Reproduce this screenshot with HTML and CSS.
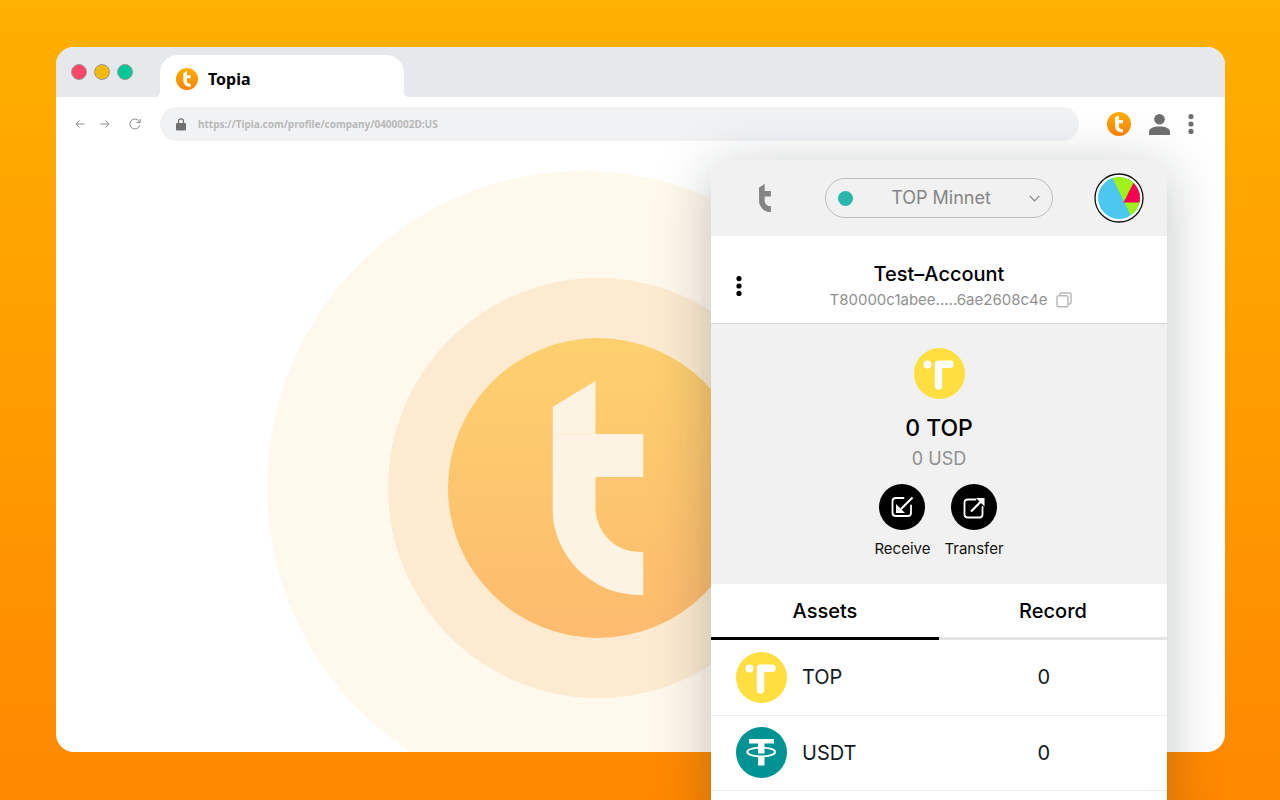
FILE: index.html
```html
<!DOCTYPE html>
<html lang="en">
<head>
<meta charset="utf-8">
<title>Topia</title>
<meta name="viewport" content="width=device-width, initial-scale=1">
<link rel="stylesheet" href="styles.css">
</head>
<body>
<svg class="defs" width="0" height="0" aria-hidden="true">
  <defs>
    <linearGradient id="orange" x1="0" y1="0" x2="0" y2="1">
      <stop offset="0" stop-color="#ffae00"/><stop offset="1" stop-color="#ff8200"/>
    </linearGradient>
    <linearGradient id="soft-orange" x1="0" y1="0" x2="0" y2="1">
      <stop offset="0" stop-color="#fdd06e"/><stop offset="1" stop-color="#fdbb6e"/>
    </linearGradient>
    <symbol id="letter" viewBox="0 0 91 214">
      <path d="M0 26 43 0V53H91V96H43V128A44 44 0 0 0 87 171H91V214H87A87 87 0 0 1 0 127Z"/>
    </symbol>
    <symbol id="badge" viewBox="0 0 24 24">
      <circle cx="12" cy="12" r="12" fill="url(#orange)"/>
      <path fill="#fff" d="M8 5.600 12 3.400V8H16V11.300H12V14.200Q12 17 16 17.200V20.600Q8 20.400 8 13.800Z"/>
    </symbol>
    <symbol id="top-coin" viewBox="0 0 51 51">
      <circle cx="25.500" cy="25.500" r="25.500" fill="#ffdf3f"/>
      <circle cx="13.500" cy="16.500" r="4" fill="#fff"/>
      <path d="M36 16.300H24.500V38" fill="none" stroke="#fff" stroke-width="7.400" stroke-linecap="round" stroke-linejoin="round"/>
    </symbol>
    <symbol id="usdt-coin" viewBox="0 0 51 51">
      <circle cx="25.500" cy="25.500" r="25.500" fill="#009393"/>
      <path fill="#fff" d="M13 12H38V16.500H28.500V26.500H22V16.500H13ZM22 29H28.500V38.500H22Z"/>
      <ellipse cx="25.200" cy="25" rx="14" ry="4.400" fill="none" stroke="#fff" stroke-width="1.900"/>
    </symbol>
  </defs>
</svg>

<div class="stage">
  <div class="browser">
    <div class="tabstrip">
      <div class="lights"><span class="light red"></span><span class="light yellow"></span><span class="light green"></span></div>
      <div class="tab"><svg class="favicon"><use href="#badge"/></svg><span>Topia</span></div>
    </div>
    <div class="toolbar">
      <nav class="history" aria-label="History">
        <button class="plain" aria-label="Back"><svg width="10" height="10" viewBox="0 0 10 10"><path class="thin" d="M9.500 5H1M4.500 1.500 1 5 4.500 8.500"/></svg></button>
        <button class="plain" aria-label="Forward"><svg width="10" height="10" viewBox="0 0 10 10"><path class="thin" d="M.5 5H9M5.500 1.500 9 5 5.500 8.500"/></svg></button>
        <button class="plain reload" aria-label="Reload"><svg width="12" height="12" viewBox="0 0 12 12"><path class="thin" d="M10.700 7.200A5 5 0 1 1 10 3.200L11 4.500M11.200 1V4.600H7.600"/></svg></button>
      </nav>
      <label class="address">
        <svg width="10" height="13" viewBox="0 0 10 13"><path d="M2.500 6V3.300a2.500 2.500 0 0 1 5 0V6" fill="none" stroke="#707070" stroke-width="1.200"/><rect y="5" width="10" height="7.500" rx="1" fill="#707070"/></svg>
        <input type="text" aria-label="Address" value="https://Tipia.com/profile/company/0400002D:US">
      </label>
      <div class="actions">
        <button class="plain" aria-label="Topia wallet"><svg width="24" height="24"><use href="#badge"/></svg></button>
        <button class="plain" aria-label="Profile"><svg width="21" height="21" viewBox="0 0 21 21" fill="#6f6f6f"><circle cx="10.500" cy="5.300" r="5.300"/><path d="M0 21V18C0 14.500 4 12.500 10.500 12.500S21 14.500 21 18V21Z"/></svg></button>
        <button class="plain" aria-label="Menu"><svg width="6" height="20" viewBox="0 0 6 20" fill="#6f6f6f"><circle cx="3" cy="2.600" r="2.600"/><circle cx="3" cy="10" r="2.600"/><circle cx="3" cy="17.400" r="2.600"/></svg></button>
      </div>
    </div>
    <main class="content">
      <svg class="art" width="632" height="632" viewBox="0 0 632 632" aria-hidden="true">
        <circle cx="316" cy="316" r="316" fill="#fff8ec"/>
        <circle cx="331" cy="317" r="210" fill="#fcebd0"/>
        <circle cx="331" cy="317" r="150" fill="url(#soft-orange)"/>
        <use href="#letter" x="285.500" y="210" width="91" height="214" fill="#fdf3e2"/>
        <path d="M285.500 263.300H328" stroke="#fcebd0"/>
      </svg>
    </main>
  </div>

  <section class="wallet" aria-label="Wallet">
    <header class="wallet-head">
      <svg class="mark" width="12" height="28"><use href="#letter"/></svg>
      <div class="network">
        <span class="status"></span>
        <select aria-label="Network"><option>TOP Minnet</option></select>
        <svg class="chevron" width="11" height="7" viewBox="0 0 11 7"><path d="M.7.8 5.500 5.800 10.300.8" fill="none" stroke="#858585" stroke-width="1.200"/></svg>
      </div>
      <button class="plain avatar" aria-label="Account avatar">
        <svg width="50" height="50" viewBox="0 0 50 50">
          <clipPath id="disc"><circle cx="25" cy="25" r="21"/></clipPath>
          <circle cx="25" cy="25" r="24" fill="#fff" stroke="#111" stroke-width="1.300"/>
          <g clip-path="url(#disc)"><path fill="#4cc8f0" d="M0 0H50V50H0Z"/><path fill="#a0f01a" d="M16 0H50V50H40.500Z"/><path fill="#f70054" d="M29.500 29.500 43 3H50V29.500Z"/></g>
        </svg>
      </button>
    </header>
    <div class="account">
      <button class="plain more" aria-label="Account options"><svg width="6" height="20" viewBox="0 0 6 20"><circle cx="3" cy="2.600" r="2.600"/><circle cx="3" cy="10" r="2.600"/><circle cx="3" cy="17.400" r="2.600"/></svg></button>
      <div class="identity">
        <h1>Test–Account</h1>
        <p class="hash">T80000c1abee.....6ae2608c4e
          <button class="plain copy" aria-label="Copy address"><svg width="16" height="16" viewBox="0 0 16 16" fill="none" stroke="#b9b9b9" stroke-width="1.500"><rect x="1" y="3.800" width="11" height="11" rx="1.500"/><path d="M4 3.500V2.500Q4 1 5.500 1H13.500Q15 1 15 2.500V10.500Q15 12 13.500 12H12.500"/></svg></button>
        </p>
      </div>
    </div>
    <div class="balance">
      <svg class="coin"><use href="#top-coin"/></svg>
      <p class="amount">0 TOP</p>
      <p class="fiat">0 USD</p>
      <div class="moves">
        <button class="move"><svg width="46" height="46" viewBox="0 0 46 46"><circle cx="23" cy="23" r="23"/><g fill="none" stroke="#fff" stroke-width="1.800"><path d="M24.500 14H17Q13.500 14 13.500 17V29Q13.500 32 17 32H29Q32 32 32 29V21.500" stroke-linecap="round"/><path d="M33.500 13.500 22 25" stroke-width="2.200"/></g><path d="M17 20V29H26Z" fill="#fff"/></svg><span>Receive</span></button>
        <button class="move"><svg width="46" height="46" viewBox="0 0 46 46"><circle cx="23" cy="23" r="23"/><g fill="none" stroke="#fff" stroke-width="1.800"><path d="M24.500 15.500H17Q13.500 15.500 13.500 18.500V30.500Q13.500 33.500 17 33.500H28.500Q31.500 33.500 31.500 30.500V23" stroke-linecap="round"/><path d="M20 27.500 30 17.500" stroke-width="2.200"/></g><path d="M25 14H33.500V22.500Z" fill="#fff"/></svg><span>Transfer</span></button>
      </div>
    </div>
    <div class="views" role="tablist">
      <button class="view active" role="tab" aria-selected="true">Assets</button>
      <button class="view" role="tab" aria-selected="false">Record</button>
    </div>
    <table class="assets">
      <tbody>
        <tr><th scope="row"><div class="asset"><svg class="coin"><use href="#top-coin"/></svg>TOP</div></th><td>0</td></tr>
        <tr><th scope="row"><div class="asset"><svg class="coin"><use href="#usdt-coin"/></svg>USDT</div></th><td>0</td></tr>
      </tbody>
    </table>
  </section>
</div>
</body>
</html>
```
FILE: styles.css
```css
* { box-sizing: border-box; }
body { margin: 0; font-family: Inter, "Liberation Sans", sans-serif; color: #000; }
h1, p { margin: 0; }
svg { display: block; flex: none; }
.defs { position: absolute; }
.plain { padding: 0; border: 0; background: none; cursor: pointer; }

.stage {
  position: relative;
  display: flex;
  height: 100vh;
  padding: 47px 55px 48px 56px;
  overflow: hidden;
  background: linear-gradient(#ffb000, #ff8800);
}
.browser {
  flex: 1;
  display: flex;
  flex-direction: column;
  overflow: hidden;
  border-radius: 18px;
  background: #fff;
}

.tabstrip { display: flex; align-items: flex-end; height: 50px; background: #e6e9ec; }
.lights { display: flex; gap: 7px; width: 104px; padding: 0 0 17px 15px; }
.light { width: 16px; height: 16px; border: 1px solid #999; border-radius: 50%; }
.red { background: #ff4566; }
.yellow { background: #f0b90b; }
.green { background: #00c896; }
.tab {
  position: relative;
  display: flex;
  align-items: center;
  gap: 10px;
  width: 244px;
  height: 42px;
  padding: 6px 16px 0;
  border-radius: 18px 18px 0 0;
  background: #fff;
  font: 700 16px/24px "Noto Sans", sans-serif;
}
.tab::before, .tab::after {
  content: "";
  position: absolute;
  bottom: 0;
  width: 5px;
  height: 5px;
}
.tab::before { right: 100%; background: radial-gradient(circle at 0 0, #e6e9ec 5px, #fff 5px); }
.tab::after { left: 100%; background: radial-gradient(circle at 100% 0, #e6e9ec 5px, #fff 5px); }
.favicon { width: 22px; height: 22px; }

.toolbar { display: flex; align-items: center; flex: none; height: 54px; padding-right: 31px; }
.history { display: flex; align-items: center; gap: 15px; width: 104px; padding-left: 19px; }
.reload { margin-left: 4px; }
.thin { fill: none; stroke: #8c8c8c; stroke-width: 1; }
.address {
  flex: 1;
  display: flex;
  align-items: center;
  gap: 12px;
  height: 34px;
  padding: 0 16px;
  border-radius: 17px;
  background: #f1f2f4;
}
.address input {
  flex: 1;
  min-width: 0;
  padding: 0;
  border: 0;
  outline: 0;
  background: none;
  color: #b8b8b8;
  font: 700 10px/16px "Noto Sans", sans-serif;
}
.actions { display: flex; align-items: center; gap: 18px; margin-left: 28px; }

.content { flex: 1; min-height: 0; overflow: hidden; padding: 20px 0 0 211px; }

.wallet {
  position: absolute;
  top: 160px;
  right: 113px;
  bottom: -100px;
  width: 456px;
  border-radius: 16px;
  background: #fff;
  box-shadow: 0 10px 56px rgba(20, 28, 36, 0.26);
}
.wallet-head {
  display: grid;
  grid-template-columns: 1fr 228px 1fr;
  align-items: center;
  height: 76px;
  border-radius: 16px 16px 0 0;
  background: #f1f1f1;
}
.mark { margin-left: 48px; fill: #858585; }
.network {
  display: flex;
  align-items: center;
  height: 40px;
  padding: 0 12px;
  border: 1px solid #b9bec5;
  border-radius: 20px;
}
.status { width: 15px; height: 15px; border-radius: 50%; background: #2ab6ad; }
.network select {
  flex: 1;
  appearance: none;
  padding: 0;
  border: 0;
  outline: 0;
  background: none;
  color: #858585;
  font: 18px/24px Inter, sans-serif;
  text-align: center;
  text-align-last: center;
}
.avatar { justify-self: end; margin-right: 23px; }

.account {
  display: grid;
  grid-template-columns: 56px 1fr 56px;
  align-items: center;
  height: 88px;
  padding-top: 12px;
  border-bottom: 1px solid #d6d6d6;
}
.more { justify-self: center; }
.identity { text-align: center; }
.identity h1 { font-size: 20px; line-height: 28px; font-weight: 500; }
.hash {
  display: flex;
  justify-content: center;
  align-items: center;
  gap: 9px;
  padding-left: 24px;
  color: #909090;
  font-size: 15px;
  line-height: 24px;
}

.balance {
  display: flex;
  flex-direction: column;
  align-items: center;
  height: 260px;
  padding-top: 24px;
  background: #f1f1f1;
}
.coin { width: 51px; height: 51px; }
.amount { margin-top: 12px; font-size: 23px; line-height: 34px; font-weight: 500; }
.fiat { margin-bottom: 11px; color: #909090; font-size: 18px; line-height: 28px; }
.moves { display: flex; gap: 14px; }
.move {
  display: flex;
  flex-direction: column;
  align-items: center;
  gap: 9px;
  padding: 0;
  border: 0;
  background: none;
  color: #111;
  font: 15px/20px Inter, sans-serif;
}

.views { display: grid; grid-template-columns: 1fr 1fr; height: 56px; }
.view {
  padding: 0;
  border: 0;
  border-bottom: 3px solid #e4e4e4;
  background: none;
  font: 500 20px/24px Inter, sans-serif;
}
.view.active { border-color: #000; }

.assets { width: 100%; border-collapse: collapse; table-layout: fixed; color: #141a24; font-size: 20px; }
.assets th, .assets td { height: 75px; padding: 0; border-bottom: 1px solid #ececec; font-weight: 400; }
.assets th { width: 46%; text-align: left; }
.assets td { text-align: center; }
.asset { display: flex; align-items: center; gap: 15px; padding-left: 25px; }
```
